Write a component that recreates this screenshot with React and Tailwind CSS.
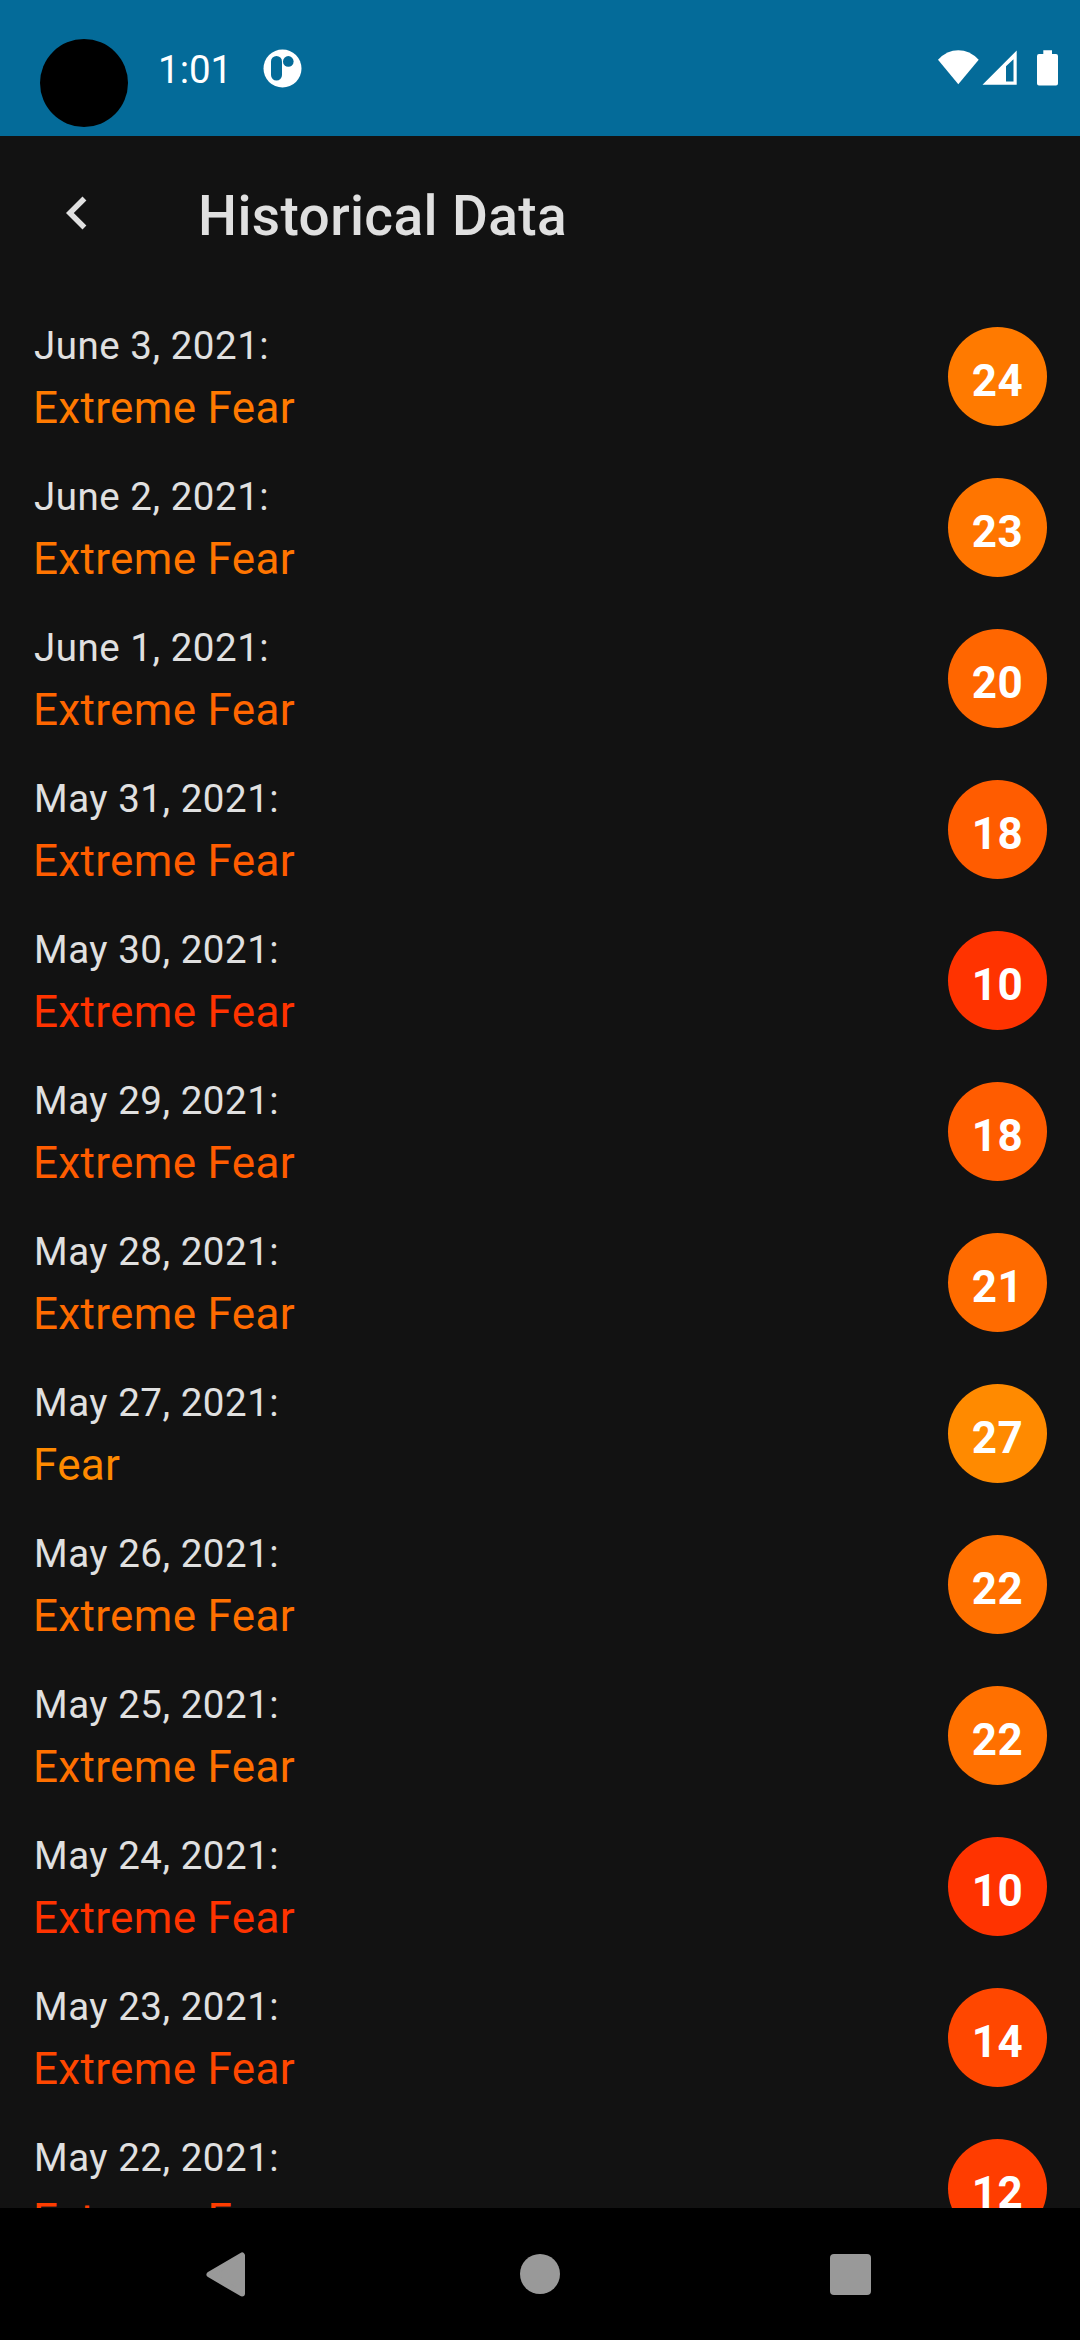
const rows = [
  { date: "June 3, 2021:", mood: "Extreme Fear", value: 24 },
  { date: "June 2, 2021:", mood: "Extreme Fear", value: 23 },
  { date: "June 1, 2021:", mood: "Extreme Fear", value: 20 },
  { date: "May 31, 2021:", mood: "Extreme Fear", value: 18 },
  { date: "May 30, 2021:", mood: "Extreme Fear", value: 10 },
  { date: "May 29, 2021:", mood: "Extreme Fear", value: 18 },
  { date: "May 28, 2021:", mood: "Extreme Fear", value: 21 },
  { date: "May 27, 2021:", mood: "Fear", value: 27 },
  { date: "May 26, 2021:", mood: "Extreme Fear", value: 22 },
  { date: "May 25, 2021:", mood: "Extreme Fear", value: 22 },
  { date: "May 24, 2021:", mood: "Extreme Fear", value: 10 },
  { date: "May 23, 2021:", mood: "Extreme Fear", value: 14 },
  { date: "May 22, 2021:", mood: "Extreme Fear", value: 12 },
];

// Red at 0, yellow at 50.
const colorFor = (value) => `rgb(255, ${Math.round((value / 50) * 255)}, 0)`;

function StatusBar() {
  return (
    <header className="flex h-[136px] shrink-0 items-start bg-[#046b99] text-white">
      <div className="ml-10 mt-[39px] size-[88px] rounded-full bg-black" />
      <div className="ml-[30px] mt-[47px] w-[76px] whitespace-nowrap text-[38.5px] leading-[46px]">1:01</div>
      <svg className="ml-[29px] mt-[49px]" width="39" height="39" viewBox="0 0 39 39">
        <circle cx="19.5" cy="19.5" r="19" fill="#fff" />
        <rect x="8" y="7" width="11" height="24.5" rx="5.5" fill="#046b99" />
        <circle cx="25.3" cy="12.4" r="5.3" fill="#046b99" />
      </svg>
      <div className="ml-auto mr-[22px] mt-[50px] flex">
        <svg width="41" height="36" viewBox="0 0 41 36">
          <path d="M0 9.7Q9 .3 20.3 .3T40.7 9.7L20.3 34.2Z" fill="#fff" />
        </svg>
        <svg className="ml-[3px]" width="36" height="36" viewBox="0 0 36 36">
          <path fillRule="evenodd" d="M34.7 .5V34.7H.5ZM31.5 9.3L24 16.2V31.5H31.5Z" fill="#fff" />
        </svg>
        <svg className="ml-[19px]" width="21" height="36" viewBox="0 0 21 36">
          <path d="M6.3 .3H15V4H19Q21 4 21 6V33.5Q21 35.5 19 35.5H2Q0 35.5 0 33.5V6Q0 4 2 4H6.3Z" fill="#fff" />
        </svg>
      </div>
    </header>
  );
}

function AppBar() {
  return (
    <div className="flex h-[165px] shrink-0 items-start text-[#e0e0e0]">
      <svg className="ml-11 mt-11" width="66" height="66" viewBox="0 0 24 24">
        <path d="M15.41 7.41L14 6l-6 6 6 6 1.41-1.41L10.83 12z" fill="currentColor" />
      </svg>
      <h1 className="ml-[88px] mt-[47px] whitespace-nowrap text-[55px] font-medium leading-[66px] tracking-[0.38px]">
        Historical Data
      </h1>
    </div>
  );
}

function Row({ date, mood, value }) {
  const color = colorFor(value);
  return (
    <li className="flex h-[151px] items-center justify-between px-[33px]">
      <div className="whitespace-nowrap pt-[2px]">
        <p className="pl-px text-[38.5px] leading-[60px] tracking-[0.53px] text-[#e0e0e0]">{date}</p>
        <p className="text-[44px] leading-[64px] tracking-[0.33px]" style={{ color }}>{mood}</p>
      </div>
      <div
        className="flex size-[99px] items-center justify-center rounded-full pt-[9px] text-[44px] font-bold leading-[52px] tracking-[0.41px] text-white"
        style={{ backgroundColor: color }}
      >
        {value}
      </div>
    </li>
  );
}

function NavBar() {
  return (
    <nav className="flex h-[132px] shrink-0 items-start bg-black pt-11">
      <svg className="ml-[206px]" width="40" height="45" viewBox="0 0 40 45">
        <path d="M3.5 22.5L36 3.5V41.5Z" fill="#999" stroke="#999" strokeWidth="6" strokeLinejoin="round" />
      </svg>
      <div className="ml-[274px] mt-[2px] size-10 rounded-full bg-[#999]" />
      <div className="ml-[270px] mt-[2px] size-[41px] rounded-[4px] bg-[#999]" />
    </nav>
  );
}

export default function App() {
  return (
    <div className="flex h-[2340px] w-[1080px] flex-col overflow-hidden bg-[#121212] font-['Roboto',sans-serif]">
      <StatusBar />
      <AppBar />
      <ul className="min-h-0 flex-1 overflow-hidden">
        {rows.map((row) => (
          <Row key={row.date} {...row} />
        ))}
      </ul>
      <NavBar />
    </div>
  );
}
